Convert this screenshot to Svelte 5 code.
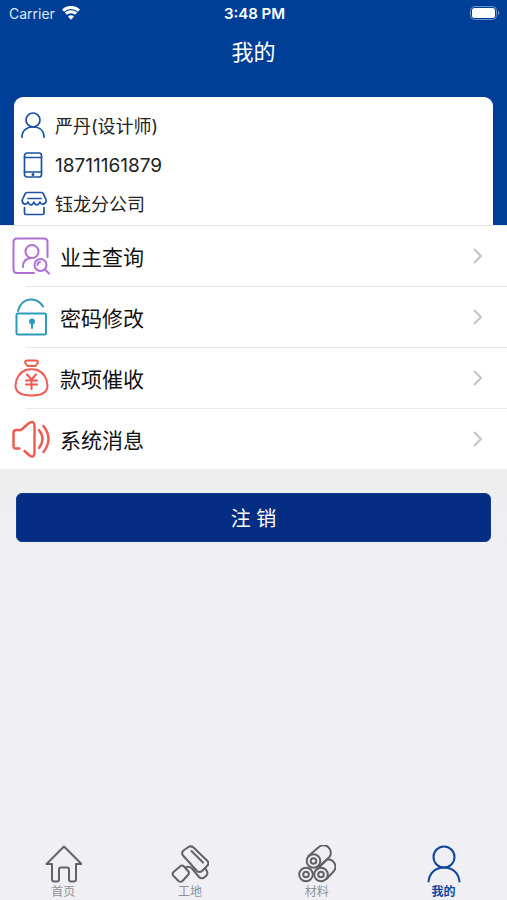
<script lang="ts">
    type IconName = 'owner' | 'lock' | 'money' | 'sound';
    type TabName = 'home' | 'site' | 'material' | 'mine';

    const menu: { icon: IconName; title: string }[] = [
        { icon: 'owner', title: '业主查询' },
        { icon: 'lock', title: '密码修改' },
        { icon: 'money', title: '款项催收' },
        { icon: 'sound', title: '系统消息' },
    ];

    const tabs: { name: TabName; title: string }[] = [
        { name: 'home', title: '首页' },
        { name: 'site', title: '工地' },
        { name: 'material', title: '材料' },
        { name: 'mine', title: '我的' },
    ];

    let currentTab = $state<TabName>('mine');
</script>

<div class="page">
    <header class="header">
        <div class="status-bar">
            <span class="carrier">
                Carrier
                <svg class="wifi" viewBox="0 0 18 14" aria-hidden="true">
                    <path d="M1 4.6a11.6 11.6 0 0 1 16 0M3.8 7.7a7.6 7.6 0 0 1 10.4 0" />
                    <path class="dot" d="M9 13.8 5.9 10.6a4.5 4.5 0 0 1 6.2 0Z" />
                </svg>
            </span>
            <span class="time">3:48 PM</span>
            <svg class="battery" viewBox="0 0 30 14" aria-hidden="true">
                <rect class="case" x="0.5" y="0.5" width="26" height="13" rx="4" />
                <rect class="level" x="2" y="2" width="23" height="10" rx="2.5" />
                <path class="tip" d="M28 4.8c2 .8 2 3.6 0 4.4Z" />
            </svg>
        </div>
        <h1 class="title">我的</h1>
        <ul class="card">
            <li>
                <svg class="card-icon" viewBox="0 0 26 26" aria-hidden="true">
                    <circle cx="12" cy="8" r="7" />
                    <path d="M1 25.2C1 18.5 5.500 15 12 15S23 18.500 23 25.200" />
                </svg>
                严丹(设计师)
            </li>
            <li>
                <svg class="card-icon" viewBox="0 0 26 26" aria-hidden="true">
                    <rect x="3.5" y="1" width="17" height="24" rx="2.5" />
                    <path d="M3.500 5.500h17M3.500 20h17" />
                    <circle cx="12" cy="22.5" r=".7" />
                </svg>
                <span class="phone">18711161879</span>
            </li>
            <li>
                <svg class="card-icon" viewBox="0 0 26 26" aria-hidden="true">
                    <path d="M6 2.500h14.500q1.200 0 1.800 1.200L25.200 10c.4 4-4.700 5.800-6.300 2-1.500 3.800-4.700 3.800-6 0-1.300 3.800-4.500 3.800-6 0C5.300 15.800 1 14 1.200 10L4.200 3.700Q4.800 2.500 6 2.500ZM7 8.500h13" />
                    <path d="M3.500 17.500V23q0 1.500 1.500 1.500h16.500q1.500 0 1.500-1.500V17.500" />
                </svg>
                钰龙分公司
            </li>
        </ul>
    </header>

    <nav class="menu">
        {#each menu as item}
            <a class="menu-item" href="#{item.icon}">
                <svg class="menu-icon {item.icon}" viewBox="0 0 38 38" aria-hidden="true">
                    {#if item.icon === 'owner'}
                        <path d="M22 36H5q-3.500 0-3.500-3.500V5Q1.500 1.500 5 1.500h27q3.500 0 3.500 3.500v15" />
                        <circle cx="20" cy="14.500" r="6.500" />
                        <path d="M11 30c0-6 3.500-9 9-9" />
                        <circle cx="28.500" cy="28" r="6" />
                        <path d="m33 32.500 4 4M25.500 28q0-2.500 2.500-3" />
                    {:else if item.icon === 'lock'}
                        <path d="M6 13C10 -1.500 25-1.500 31 8.500" />
                        <rect x="4.500" y="15.500" width="29.500" height="21" rx="1.500" />
                        <circle class="solid" cx="20" cy="23.500" r="2" />
                        <path d="M20 24v6" />
                    {:else if item.icon === 'money'}
                        <path d="m15.500 7-2.200-3q-.8-2.500 2-2.500h8.400q2.800 0 2 2.500l-2.200 3Z" />
                        <path d="M13.500 11C7.500 13.500 3.500 20 3.500 26.500c0 7 5 10 16 10s16-3 16-10C35.500 20 31.500 13.500 25.500 11Q19.500 9.500 13.500 11Z" />
                        <path d="m15 15.500 4.500 5 4.500-5M19.500 20.500V30M14 21.500h11M14 25.500h11" />
                    {:else}
                        <path d="M7.500 28.500H4Q1.500 28.500 1.500 26V13q0-3 3-3h4.500L17 3Q22.500 0 22.500 6v26.500Q22.500 38.500 17.500 35.500l-5-4.500" />
                        <path d="M27 10q7 9 0 18M31.500 6q10 13 0 26" />
                    {/if}
                </svg>
                <span class="menu-title">{item.title}</span>
                <svg class="chevron" viewBox="0 0 10 16" aria-hidden="true">
                    <path d="m1.500 1.500 6.500 6.500-6.500 6.500" />
                </svg>
            </a>
        {/each}
    </nav>

    <main class="content">
        <button class="logout" type="button">注 销</button>
    </main>

    <nav class="tab-bar">
        {#each tabs as tab}
            <button
                class="tab"
                class:active={currentTab === tab.name}
                type="button"
                onclick={() => (currentTab = tab.name)}
            >
                <svg class="tab-icon" viewBox="0 0 38 38" aria-hidden="true">
                    {#if tab.name === 'home'}
                        <path d="M20 1.500 2.500 19H8v15q0 2.500 2.500 2.500H13q2 0 2-2V24q0-1.500 1.500-1.500h7q1.500 0 1.500 1.500v10.500q0 2 2 2h2.500q2.500 0 2.500-2.500V19H37.500Z" />
                    {:else if tab.name === 'site'}
                        <path d="m12.500 5.500 5-3.500q2.500-1.500 5 .5L36 15.500q2.500 2.500.5 5L31 26q-2.500 2-5 0L12 10.500q-2-3 .5-5ZM20.500 6l11.500 11.500" />
                        <path d="m9 21.500-6.500 5.500q-1.800 2 0 4l5 5q2 1.500 4 0l5.500-6q1.800-2 0-4L13 21.500q-2-2-4 0Z" />
                        <path d="M15.500 22q3-1 5.500 1.500l7 8.500q2 2 4.500 1l3-2.500q1.500-1.500.5-4l-1.500-3" />
                    {:else if tab.name === 'material'}
                        <circle cx="15.500" cy="16" r="6.800" />
                        <circle cx="15.500" cy="16" r="2.800" />
                        <circle cx="8" cy="29.500" r="6.800" />
                        <circle cx="8" cy="29.500" r="2.800" />
                        <circle cx="23" cy="29.500" r="6.800" />
                        <circle cx="23" cy="29.500" r="2.800" />
                        <path d="M10.500 11 20 2.800A7.300 7.300 0 0 1 31 12.500L21 21.500" />
                        <path d="M29 14.500A7.300 7.300 0 0 1 36 26L28.500 34M19 24.500 29 14.500" />
                    {:else}
                        <circle cx="19" cy="12" r="10.500" />
                        <path d="M3.500 36.500C4.500 28 10.500 22.500 19 22.500s14.500 5.500 15.500 14" />
                    {/if}
                </svg>
                {tab.title}
            </button>
        {/each}
    </nav>
</div>

<style>
    :global(body) {
        margin: 0;
    }

    .page {
        display: flex;
        flex-direction: column;
        min-height: 100vh;
        background: #efeff4;
        color: #222;
        font-family: Inter, 'Noto Sans CJK SC', sans-serif;
    }

    svg {
        flex: none;
        fill: none;
        stroke: currentColor;
        stroke-width: 2;
        stroke-linecap: round;
        stroke-linejoin: round;
    }

    .header {
        background: #003f97;
        color: #fff;
    }

    .status-bar {
        display: grid;
        grid-template-columns: 1fr auto 1fr;
        align-items: center;
        height: 26px;
        padding: 0 7px 0 9px;
        font-size: 15px;
    }

    .carrier {
        display: flex;
        align-items: center;
        gap: 7px;
        font-size: 14px;
        color: #dce8fa;
    }

    .wifi {
        width: 18px;
        height: 14px;
        color: #fff;
        stroke-width: 3;
        stroke-linecap: butt;
    }

    .wifi .dot {
        fill: #fff;
        stroke: none;
    }

    .time {
        font-weight: 600;
    }

    .battery {
        width: 30px;
        height: 14px;
        justify-self: end;
        stroke-width: 1;
    }

    .battery .case {
        stroke: #6d92c9;
    }

    .battery .level {
        fill: #fff;
        stroke: none;
    }

    .battery .tip {
        fill: #6d92c9;
        stroke: none;
    }

    .title {
        margin: 0;
        height: 71px;
        line-height: 52px;
        text-align: center;
        font-size: 22px;
        font-weight: 400;
    }

    .card {
        display: grid;
        grid-template-rows: 40px 40px 36px;
        margin: 0 14px;
        padding: 8px 7px 4px;
        list-style: none;
        border-radius: 9px 9px 0 0;
        background: #fff;
        color: #222;
        font-size: 18px;
    }

    .card li {
        display: flex;
        align-items: center;
        gap: 8px;
    }

    .card-icon {
        width: 26px;
        height: 26px;
        color: #1c51a3;
        stroke-width: 1.7;
    }

    .phone {
        font-size: 19px;
    }

    .menu {
        background: #fff;
    }

    .menu-item {
        display: flex;
        align-items: center;
        height: 61px;
        padding: 0 24px 0 12px;
        color: #111;
        font-size: 21px;
        text-decoration: none;
        background: linear-gradient(#e8e8ea, #e8e8ea) 26px 0 / 100% 1px no-repeat;
    }

    .menu-item:first-child {
        background-position: 0 0;
    }

    .menu-title {
        flex: 1;
        margin-left: 10px;
    }

    .menu-icon {
        width: 38px;
        height: 38px;
    }

    .owner {
        color: #b06fd6;
    }

    .lock {
        color: #2d9bbd;
    }

    .lock .solid {
        fill: currentColor;
    }

    .money,
    .sound {
        color: #f4574f;
    }

    .sound {
        stroke-width: 2.4;
    }

    .chevron {
        width: 10px;
        height: 16px;
        color: #c4c4c7;
    }

    .content {
        flex: 1;
        padding: 24px 16px;
        background: linear-gradient(#eee, #efeff4 90px);
    }

    .logout {
        display: block;
        width: 100%;
        height: 49px;
        border: 1px solid #0d3c8c;
        border-radius: 6px;
        background: #052d84;
        color: #fff;
        font-family: inherit;
        font-size: 20px;
        cursor: pointer;
    }

    .tab-bar {
        display: grid;
        grid-template-columns: repeat(4, 1fr);
    }

    .tab {
        display: flex;
        flex-direction: column;
        align-items: center;
        gap: 2px;
        padding: 0 0 1px;
        border: none;
        background: transparent;
        color: #929296;
        font-family: inherit;
        font-size: 12px;
        line-height: 14px;
        cursor: pointer;
    }

    .tab-icon {
        width: 38px;
        height: 38px;
        color: #626266;
    }

    .tab.active {
        color: #0d479b;
        font-weight: 700;
    }

    .tab.active .tab-icon {
        color: #0d479b;
    }
</style>
